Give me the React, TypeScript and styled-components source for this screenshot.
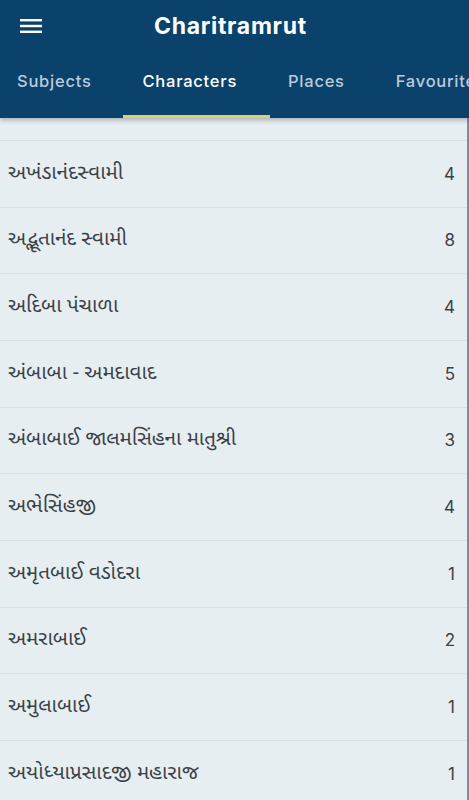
import React from "react";
import styled, { createGlobalStyle } from "styled-components";

const GlobalStyle = createGlobalStyle`
    html, body {
        margin: 0;
        padding: 0;
        background: #e7eef2;
    }
    body {
        font-family: "Noto Sans Gujarati", "Lohit Gujarati", "Noto Sans", "DejaVu Sans", sans-serif;
        overflow: hidden;
    }
`;

const Page = styled.div`
    width: 469px;
    height: 800px;
    display: flex;
    flex-direction: column;
    background: #e7eef2;
    overflow: hidden;
    position: relative;
`;

const Header = styled.header`
    background: #0a426c;
    box-shadow: 0 2px 5px rgba(0, 0, 0, 0.28);
    position: relative;
    z-index: 1;
`;

const TopBar = styled.div`
    height: 51px;
    display: flex;
    align-items: center;
    padding: 0 0 0 19px;
`;

const MenuButton = styled.button`
    width: 24px;
    height: 24px;
    border: none;
    background: none;
    padding: 0;
    display: flex;
    align-items: center;
    justify-content: center;
    color: #ffffff;
`;

const Title = styled.h1`
    margin: 0 0 0 111px;
    font-family: "Inter", "Open Sans", sans-serif;
    font-weight: 700;
    font-size: 23px;
    letter-spacing: 0.7px;
    color: #ffffff;
`;

const TabRow = styled.nav`
    height: 67px;
    display: flex;
    align-items: center;
    padding-left: 17px;
    gap: 51px;
    white-space: nowrap;
    overflow: hidden;
`;

const Tab = styled.div<{ $active?: boolean }>`
    position: relative;
    height: 100%;
    display: flex;
    align-items: center;
    padding-bottom: 8px;
    box-sizing: border-box;
    font-family: "Inter", "Open Sans", sans-serif;
    font-weight: 500;
    font-size: 16.5px;
    letter-spacing: 0.75px;
    color: ${(p) => (p.$active ? "#ffffff" : "#b9cbdc")};

    &::after {
        content: "";
        display: ${(p) => (p.$active ? "block" : "none")};
        position: absolute;
        left: -20px;
        right: -33px;
        bottom: -1px;
        height: 4px;
        background: #dccf6c;
    }
`;

const List = styled.ul`
    list-style: none;
    margin: 0;
    padding: 22px 0 0;
    flex: 1;
    border-right: 2px solid #7890a2;
`;

const Row = styled.li`
    height: 66.67px;
    box-sizing: border-box;
    border-top: 1px solid #d7e1e7;
    display: flex;
    align-items: center;
    justify-content: space-between;
    padding: 0 12px 0 8px;
    color: #3a4147;
`;

const Name = styled.span`
    font-size: 20.5px;
    font-weight: 400;
`;

const Count = styled.span`
    font-family: "Inter", "Open Sans", sans-serif;
    font-size: 17px;
    color: #3b4146;
`;

const characters = [
    { name: "અખંડાનંદસ્વામી", count: 4 },
    { name: "અદ્ભૂતાનંદ સ્વામી", count: 8 },
    { name: "અદિબા પંચાળા", count: 4 },
    { name: "અંબાબા - અમદાવાદ", count: 5 },
    { name: "અંબાબાઈ જાલમસિંહના માતુશ્રી", count: 3 },
    { name: "અભેસિંહજી", count: 4 },
    { name: "અમૃતબાઈ વડોદરા", count: 1 },
    { name: "અમરાબાઈ", count: 2 },
    { name: "અમુલાબાઈ", count: 1 },
    { name: "અયોધ્યાપ્રસાદજી મહારાજ", count: 1 },
];

const tabs = ["Subjects", "Characters", "Places", "Favourites"];

export default function App() {
    return (
        <Page>
            <GlobalStyle />
            <Header>
                <TopBar>
                    <MenuButton aria-label="menu">
                        <svg width="22" height="16" viewBox="0 0 22 16">
                            <rect x="0" y="1" width="22" height="2.4" fill="currentColor" />
                            <rect x="0" y="6.8" width="22" height="2.4" fill="currentColor" />
                            <rect x="0" y="12.6" width="22" height="2.4" fill="currentColor" />
                        </svg>
                    </MenuButton>
                    <Title>Charitramrut</Title>
                </TopBar>
                <TabRow>
                    {tabs.map((t) => (
                        <Tab key={t} $active={t === "Characters"}>
                            {t}
                        </Tab>
                    ))}
                </TabRow>
            </Header>
            <List>
                {characters.map((c) => (
                    <Row key={c.name}>
                        <Name>{c.name}</Name>
                        <Count>{c.count}</Count>
                    </Row>
                ))}
            </List>
        </Page>
    );
}
